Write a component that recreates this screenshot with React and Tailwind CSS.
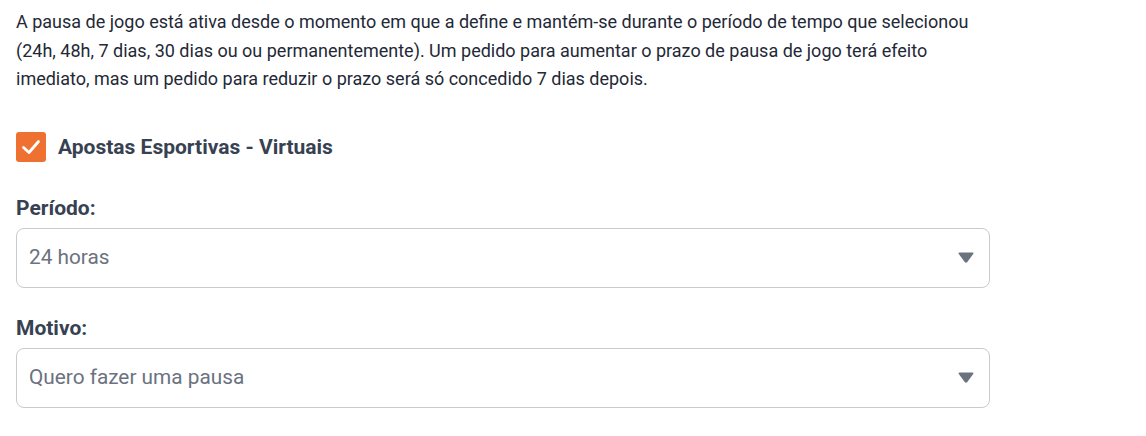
import React from "react";

function Caret() {
  return (
    <svg width="18" height="13" viewBox="0 0 18 13" className="shrink-0">
      <path
        d="M2.5 1.5 H15.5 Q17.2 1.5 16.2 3 L10.3 11 Q9 12.6 7.7 11 L1.8 3 Q0.8 1.5 2.5 1.5 Z"
        fill="#6b7280"
      />
    </svg>
  );
}

function SelectBox({ value }) {
  return (
    <div className="flex h-[60px] w-[974px] items-center justify-between rounded-lg border border-[#c8cacf] bg-white pl-[12px] pr-[14px]">
      <span className="text-[20.8px] text-[#6b7280]">{value}</span>
      <Caret />
    </div>
  );
}

export default function App() {
  return (
    <div className="min-h-[436px] bg-white px-4 pt-[8px] font-['Roboto','Liberation_Sans',sans-serif]">
      <p className="text-[18px] leading-[28.5px] text-[#1f2937]">
        A pausa de jogo está ativa desde o momento em que a define e mantém-se durante o período de tempo que selecionou
        <br />
        (24h, 48h, 7 dias, 30 dias ou ou permanentemente). Um pedido para aumentar o prazo de pausa de jogo terá efeito
        <br />
        imediato, mas um pedido para reduzir o prazo será só concedido 7 dias depois.
      </p>

      <div className="mt-[38px] flex h-[30px] items-center gap-3">
        <div className="flex h-[30px] w-[30px] items-center justify-center rounded-[3px] bg-[#ef7132]">
          <svg width="22" height="18" viewBox="0 0 22 18">
            <path d="M3.5 9.5 L9 14.5 L18.5 3.5" fill="none" stroke="white" strokeWidth="2.8" strokeLinecap="round" strokeLinejoin="round" />
          </svg>
        </div>
        <span className="text-[21px] leading-[24px] font-bold text-[#374151]">Apostas Esportivas - Virtuais</span>
      </div>

      <div className="mt-[34px] text-[21px] leading-[24px] font-bold text-[#374151]">Período:</div>
      <div className="mt-[8px]">
        <SelectBox value="24 horas" />
      </div>

      <div className="mt-[28px] text-[21px] leading-[24px] font-bold text-[#374151]">Motivo:</div>
      <div className="mt-[8px]">
        <SelectBox value="Quero fazer uma pausa" />
      </div>
    </div>
  );
}
